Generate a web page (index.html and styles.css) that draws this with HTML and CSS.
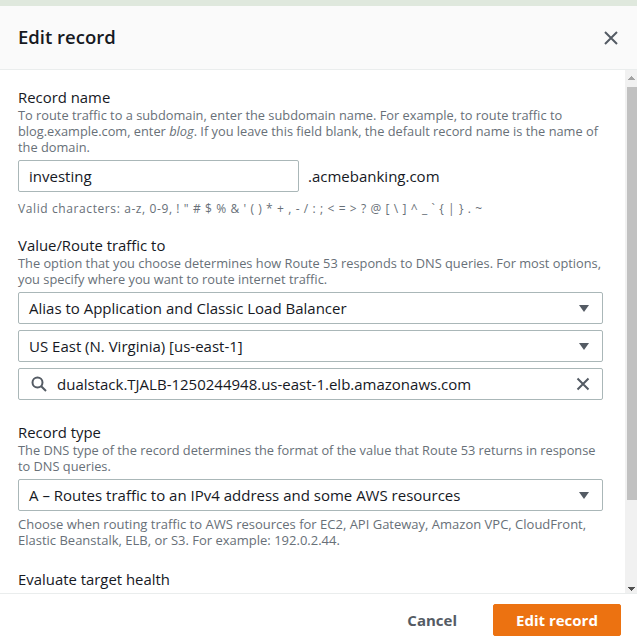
FILE: index.html
```html
<!DOCTYPE html>
<html lang="en">
<head>
<meta charset="utf-8">
<title>Edit record</title>
<link rel="stylesheet" href="styles.css">
</head>
<body>
<div class="page-strip"></div>
<div class="modal">
  <header class="modal-header">
    <h2 class="modal-title">Edit record</h2>
    <button class="icon-btn close-btn" aria-label="Close">
      <svg width="16" height="16" viewBox="0 0 16 16"><path d="M2 2 L14 14 M14 2 L2 14" stroke="#545b64" stroke-width="2" fill="none"/></svg>
    </button>
  </header>

  <div class="modal-body">
    <div class="modal-content">
      <section class="field">
        <div class="field-label">Record name</div>
        <div class="field-desc">To route traffic to a subdomain, enter the subdomain name. For example, to route traffic to blog.example.com, enter <i>blog</i>. If you leave this field blank, the default record name is the name of the domain.</div>
        <div class="name-row">
          <div class="input name-input">investing</div>
          <span class="domain-suffix">.acmebanking.com</span>
        </div>
        <div class="field-hint">Valid characters: a-z, 0-9, ! " # $ % &amp; ' ( ) * + , - / : ; &lt; = &gt; ? @ [ \ ] ^ _ ` { | } . ~</div>
      </section>

      <section class="field">
        <div class="field-label">Value/Route traffic to</div>
        <div class="field-desc">The option that you choose determines how Route 53 responds to DNS queries. For most options, you specify where you want to route internet traffic.</div>
        <div class="stack">
          <div class="input select">
            <span>Alias to Application and Classic Load Balancer</span>
            <svg class="caret" width="12" height="7" viewBox="0 0 12 7"><path d="M1 0 H11 L6 7 Z" fill="#545b64"/></svg>
          </div>
          <div class="input select">
            <span>US East (N. Virginia) [us-east-1]</span>
            <svg class="caret" width="12" height="7" viewBox="0 0 12 7"><path d="M1 0 H11 L6 7 Z" fill="#545b64"/></svg>
          </div>
          <div class="input search">
            <svg class="search-icon" width="16" height="16" viewBox="0 0 16 16"><circle cx="6.5" cy="6.5" r="5" stroke="#545b64" stroke-width="2" fill="none"/><path d="M10.2 10.2 L15 15" stroke="#545b64" stroke-width="2"/></svg>
            <span class="search-text">dualstack.TJALB-1250244948.us-east-1.elb.amazonaws.com</span>
            <svg class="clear-icon" width="14" height="14" viewBox="0 0 14 14"><path d="M1.5 1.5 L12.5 12.5 M12.5 1.5 L1.5 12.5" stroke="#545b64" stroke-width="2" fill="none"/></svg>
          </div>
        </div>
      </section>

      <section class="field">
        <div class="field-label">Record type</div>
        <div class="field-desc">The DNS type of the record determines the format of the value that Route 53 returns in response to DNS queries.</div>
        <div class="input select">
          <span>A – Routes traffic to an IPv4 address and some AWS resources</span>
          <svg class="caret" width="12" height="7" viewBox="0 0 12 7"><path d="M1 0 H11 L6 7 Z" fill="#545b64"/></svg>
        </div>
        <div class="field-hint hint-below">Choose when routing traffic to AWS resources for EC2, API Gateway, Amazon VPC, CloudFront, Elastic Beanstalk, ELB, or S3. For example: 192.0.2.44.</div>
      </section>

      <section class="field field-last">
        <div class="field-label">Evaluate target health</div>
      </section>
    </div>

    <div class="scrollbar">
      <div class="sb-btn sb-up"></div>
      <div class="sb-track"><div class="sb-thumb"></div></div>
      <div class="sb-btn sb-down"></div>
    </div>
  </div>

  <footer class="modal-footer">
    <button class="btn btn-link">Cancel</button>
    <button class="btn btn-primary">Edit record</button>
  </footer>
</div>
</body>
</html>
```

FILE: styles.css
```css
* { box-sizing: border-box; }

html, body {
  margin: 0;
  padding: 0;
  background: #ffffff;
}

body {
  font-family: "Open Sans", "Noto Sans", sans-serif;
  color: #16191f;
  width: 637px;
  height: 640px;
  overflow: hidden;
}

.page-strip {
  height: 6px;
  background: #dfe8dd;
}

.modal {
  background: #ffffff;
}

/* header */
.modal-header {
  height: 64px;
  background: #fafafa;
  border-bottom: 1px solid #eaeded;
  display: flex;
  align-items: center;
  justify-content: space-between;
  padding: 0 18px 0 18px;
}

.modal-title {
  margin: 0;
  font-size: 18.5px;
  font-weight: 600;
  line-height: 24px;
  color: #16191f;
  transform: translateY(-1px);
}

.icon-btn {
  border: 0;
  background: none;
  padding: 0;
  display: flex;
  cursor: pointer;
}

/* body with its own scrollbar column */
.modal-body {
  height: 523px;
  display: flex;
}

.modal-content {
  flex: 1;
  overflow: hidden;
  padding: 17px 22px 0 18px;
}

.field-label {
  font-size: 14.9px;
  line-height: 20px;
  color: #16191f;
}

.field-desc {
  font-size: 12.8px;
  line-height: 16px;
  color: #687078;
  margin-bottom: 5px;
}

.field-hint {
  font-size: 12px;
  letter-spacing: 0.6px;
  line-height: 16px;
  color: #687078;
  margin-top: 9px;
}

.hint-below {
  margin-top: 5px;
  font-size: 13px;
  letter-spacing: 0;
}

.input {
  height: 32px;
  border: 1px solid #aab7b8;
  border-radius: 2px;
  background: #ffffff;
  font-size: 15px;
  color: #16191f;
  display: flex;
  align-items: center;
  padding: 0 12px 0 10px;
  white-space: nowrap;
}

.name-row {
  display: flex;
  align-items: center;
  gap: 9px;
}

.name-input { width: 281px; }

.domain-suffix {
  font-size: 15px;
  color: #16191f;
}

.stack {
  display: flex;
  flex-direction: column;
  gap: 6px;
}

.select { justify-content: space-between; }

.caret { flex: none; }

.search { padding-left: 12px; }
.search-icon { flex: none; margin-right: 10px; }
.search-text { flex: 1; }
.clear-icon { flex: none; }

.field:nth-child(2) { margin-top: 18px; }
.field:nth-child(3) { margin-top: 22px; }
.field-last { margin-top: 21px; padding-bottom: 30px; }

/* scrollbar column */
.scrollbar {
  width: 12px;
  background: #f1f1f1;
  display: flex;
  flex-direction: column;
}

.sb-btn {
  height: 17px;
  flex: none;
  background-repeat: no-repeat;
  background-size: 7px 4px;
  background-position: 3px 6px;
}

.sb-up {
  background-image: conic-gradient(from 139deg at 50% 0, #a3a3a3 0 82deg, transparent 0);
}

.sb-down {
  background-position: 3px 11px;
  background-image: conic-gradient(from -41deg at 50% 100%, #505050 0 82deg, transparent 0);
}

.sb-track {
  flex: 1;
}

.sb-thumb {
  height: 413px;
  margin-left: 2px;
  background: #c1c1c1;
}

/* footer */
.modal-footer {
  border-top: 1px solid #eaeded;
  display: flex;
  justify-content: flex-end;
  align-items: center;
  gap: 15px;
  padding: 10px 16px 10px 0;
}

.btn {
  font-family: inherit;
  font-size: 15px;
  font-weight: 700;
  height: 32px;
  border-radius: 2px;
  cursor: pointer;
}

.btn-link {
  border: 1px solid transparent;
  background: none;
  color: #545b64;
  padding: 0 20px;
}

.btn-primary {
  width: 128px;
  background: #ec7211;
  border: 1px solid #ec7211;
  color: #ffffff;
  padding: 0;
}
```
